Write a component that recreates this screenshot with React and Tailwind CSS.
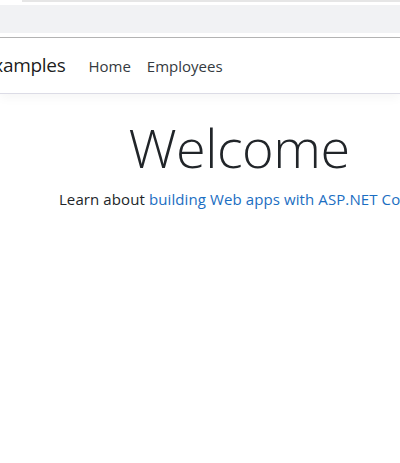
export default function App() {
  return (
    <div className="w-[400px] h-[463px] overflow-hidden bg-white font-['Open_Sans',sans-serif] text-[#212529]">
      <div className="flex h-[2px]">
        <div className="w-[22px]" />
        <div className="flex-1 bg-[#e6e6e6]" />
      </div>
      <div className="h-[3px]" />
      <div className="h-[28px] bg-[#f1f2f4]" />
      <div className="h-[4px]" />
      <div className="h-px bg-[#b4b4b4]" />
      <nav className="h-[56px] flex items-center border-b border-[#dcdce6] shadow-[0_4px_10px_rgba(0,0,0,0.04)]">
        <span className="-ml-[17px] text-[19px] text-black/90 tracking-[-0.3px]">Examples</span>
        <ul className="flex ml-[15px] pt-px">
          <li className="px-2 text-[15px] text-[#343a40]">Home</li>
          <li className="px-2 text-[15px] text-[#343a40]">Employees</li>
        </ul>
      </nav>
      <main className="w-[478px] text-center pt-[21px]">
        <h1 className="text-[54px] font-light leading-[1.2] tracking-[-0.5px]">Welcome</h1>
        <p className="text-[15px] mt-[8px] whitespace-nowrap tracking-[0.1px]">
          Learn about <a className="text-[#1b6ec2]">building Web apps with ASP.NET Core</a>.
        </p>
      </main>
    </div>
  );
}
